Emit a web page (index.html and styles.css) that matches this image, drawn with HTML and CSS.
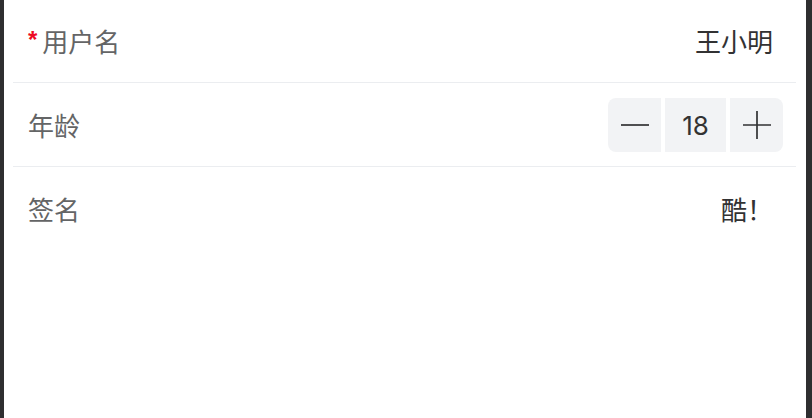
FILE: index.html
```html
<!DOCTYPE html>
<html lang="zh-CN">
<head>
<meta charset="utf-8">
<title>表单</title>
<link rel="stylesheet" href="styles.css">
</head>
<body>
<div class="page">
  <div class="row">
    <div class="row-body">
      <div class="label"><span class="required">*</span>用户名</div>
      <div class="value">王小明</div>
    </div>
    <div class="divider"></div>
  </div>
  <div class="row">
    <div class="row-body">
      <div class="label">年龄</div>
      <div class="stepper">
        <button class="step-btn minus" type="button" aria-label="减少">
          <svg width="28" height="28" viewBox="0 0 28 28"><path d="M0 14H28" stroke="#323233" stroke-width="1.7"/></svg>
        </button>
        <div class="step-input">18</div>
        <button class="step-btn plus" type="button" aria-label="增加">
          <svg width="28" height="28" viewBox="0 0 28 28"><path d="M0 14H28M14 0V28" stroke="#323233" stroke-width="1.7"/></svg>
        </button>
      </div>
    </div>
    <div class="divider"></div>
  </div>
  <div class="row">
    <div class="row-body">
      <div class="label">签名</div>
      <div class="value">酷！</div>
    </div>
  </div>
</div>
</body>
</html>
```
FILE: styles.css
```css
html, body {
  margin: 0;
  padding: 0;
  height: 100%;
}
body {
  background: #2e2e30;
  font-family: "Noto Sans CJK SC", "Noto Sans", sans-serif;
}
.page {
  margin: 0 6px 0 4px;
  height: 100%;
  background: #ffffff;
}
.row {
  padding-bottom: 1px;
}
.row-body {
  height: 82px;
  display: flex;
  align-items: center;
  justify-content: space-between;
  padding: 0 23px 0 24px;
}
.label {
  font-size: 26px;
  color: #646566;
  display: flex;
  align-items: center;
  line-height: 40px;
}
.required {
  color: #ee0a24;
  font-family: "Liberation Sans", sans-serif;
  font-weight: bold;
  font-size: 24px;
  margin-right: 5px;
  position: relative;
  top: -1px;
}
.value {
  font-size: 26px;
  color: #323233;
  padding-right: 10px;
  line-height: 40px;
}
.divider {
  height: 1px;
  margin: 0 10px 0 9px;
  background: #ebedf0;
}
.stepper {
  display: flex;
  gap: 4px;
}
.step-btn {
  width: 53px;
  height: 54px;
  border: 0;
  padding: 0;
  margin: 0;
  background: #f2f3f5;
  display: flex;
  align-items: center;
  justify-content: center;
}
.minus {
  border-radius: 8px 0 0 8px;
}
.plus {
  border-radius: 0 8px 8px 0;
}
.step-input {
  width: 61px;
  height: 54px;
  background: #f2f3f5;
  color: #323233;
  font-family: Inter, "Noto Sans", sans-serif;
  font-size: 26px;
  display: flex;
  align-items: center;
  justify-content: center;
}
```
